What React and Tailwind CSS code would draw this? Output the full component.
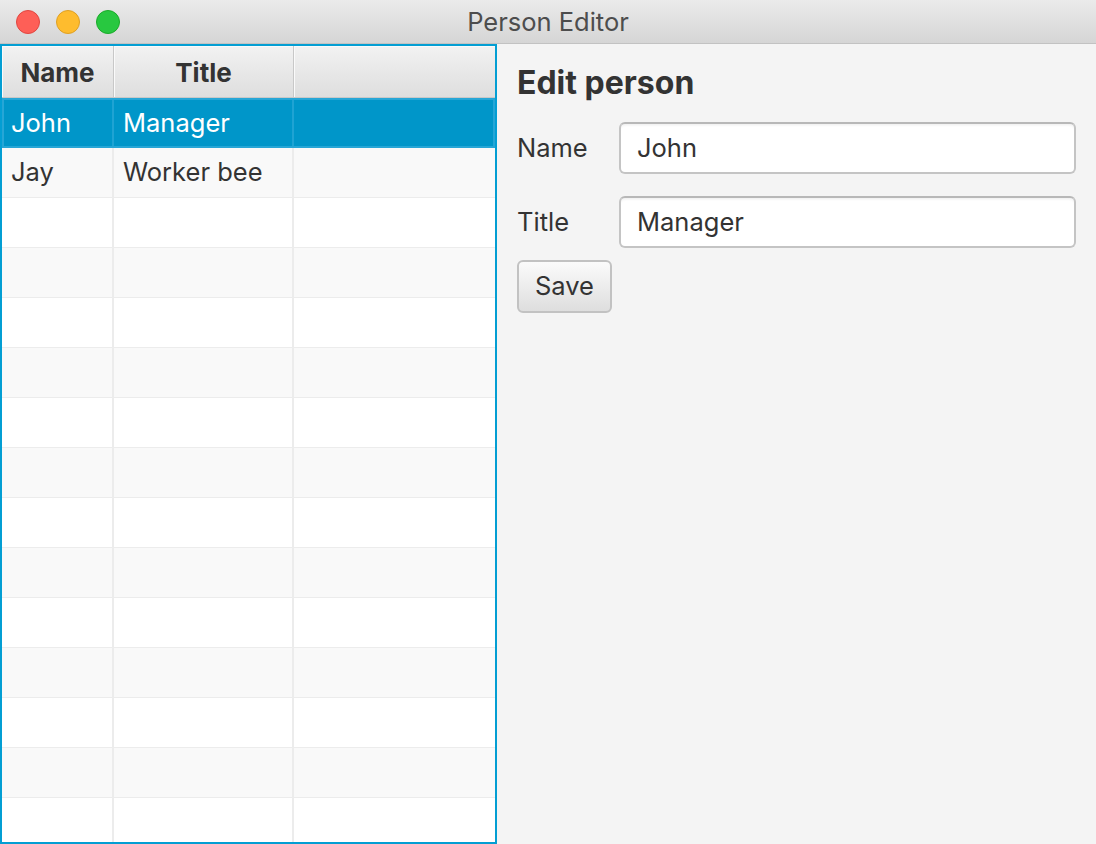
import React from "react";

const rows = [
  { name: "John", title: "Manager" },
  { name: "Jay", title: "Worker bee" },
];

const TOTAL_ROWS = 15;

export default function App() {
  const filled = [...rows];
  while (filled.length < TOTAL_ROWS) filled.push(null);

  return (
    <div
      className="w-[1096px] h-[844px] flex flex-col bg-[#f4f4f4] overflow-hidden"
      style={{ fontFamily: "Inter, 'Liberation Sans', sans-serif" }}
    >
      {/* title bar */}
      <div className="h-[44px] shrink-0 relative flex items-center justify-center bg-gradient-to-b from-[#ebebeb] to-[#d5d5d5] border-b border-[#c2c2c2]">
        <div className="absolute left-[16px] top-[10px] flex gap-[16px]">
          <span className="w-[24px] h-[24px] rounded-full bg-[#fe5f57] border border-[#e14640]" />
          <span className="w-[24px] h-[24px] rounded-full bg-[#febc2e] border border-[#dfa023]" />
          <span className="w-[24px] h-[24px] rounded-full bg-[#28c840] border border-[#1aab29]" />
        </div>
        <span className="text-[25.5px] text-[#4d4d4d] mt-[2px]">Person Editor</span>
      </div>

      <div className="flex flex-1 min-h-0">
        {/* table */}
        <div className="w-[497px] shrink-0 border-2 border-[#039ed3] bg-white flex flex-col overflow-hidden">
          <div className="h-[52px] shrink-0 flex bg-gradient-to-b from-[#f2f2f2] to-[#dedede] border-b border-[#c8c8c8]">
            <div className="w-[112px] flex items-center justify-center pt-[2px] border-r border-[#c8c8c8] shadow-[inset_1px_1px_0_#fafafa] text-[26px] font-bold text-[#333]">
              Name
            </div>
            <div className="w-[180px] flex items-center justify-center pt-[2px] border-r border-[#c8c8c8] shadow-[inset_1px_1px_0_#fafafa] text-[26px] font-bold text-[#333]">
              Title
            </div>
            <div className="flex-1 shadow-[inset_1px_1px_0_#fafafa]" />
          </div>
          {filled.map((r, i) => {
            const selected = i === 0;
            const bg = selected
              ? "bg-[#0096c9] text-white outline outline-2 -outline-offset-2 outline-[#26a6d6]"
              : i % 2 === 1
              ? "bg-[#f9f9f9] text-[#333]"
              : "bg-white text-[#333]";
            return (
              <div key={i} className={`h-[50px] shrink-0 flex text-[25.5px] ${bg}`}>
                <div
                  className={`w-[112px] flex items-center pl-[9px] border-r-2 ${
                    selected ? "border-[#1fa3d3]" : "border-[#ececec]"
                  } ${selected ? "" : "border-b border-b-[#ececec]"}`}
                >
                  {r ? r.name : ""}
                </div>
                <div
                  className={`w-[180px] flex items-center pl-[9px] border-r-2 ${
                    selected ? "border-[#1fa3d3]" : "border-[#ececec]"
                  } ${selected ? "" : "border-b border-b-[#ececec]"}`}
                >
                  {r ? r.title : ""}
                </div>
                <div className={`flex-1 ${selected ? "" : "border-b border-[#ececec]"}`} />
              </div>
            );
          })}
        </div>

        {/* editor */}
        <div className="flex-1 pl-[20px] pr-[20px] pt-[20px] text-[#333]">
          <h2 className="text-[32px] font-bold leading-[38px] mb-[20px]">Edit person</h2>
          <div className="flex items-center h-[52px] mb-[22px]">
            <span className="w-[102px] text-[25.5px]">Name</span>
            <div className="flex-1 h-[52px] rounded-[6px] border-2 border-[#c4c4c4] border-t-[#b8b8b8] bg-white flex items-center px-[16px] text-[25.5px] shadow-[inset_0_3px_3px_-2px_rgba(0,0,0,0.08)]">
              John
            </div>
          </div>
          <div className="flex items-center h-[52px] mb-[12px]">
            <span className="w-[102px] text-[25.5px]">Title</span>
            <div className="flex-1 h-[52px] rounded-[6px] border-2 border-[#c4c4c4] border-t-[#b8b8b8] bg-white flex items-center px-[16px] text-[25.5px] shadow-[inset_0_3px_3px_-2px_rgba(0,0,0,0.08)]">
              Manager
            </div>
          </div>
          <button className="w-[95px] h-[53px] rounded-[6px] border-2 border-[#c2c2c2] bg-gradient-to-b from-[#fbfbfb] to-[#dedede] text-[25.5px] text-[#333] flex items-center justify-center">
            Save
          </button>
        </div>
      </div>
    </div>
  );
}
